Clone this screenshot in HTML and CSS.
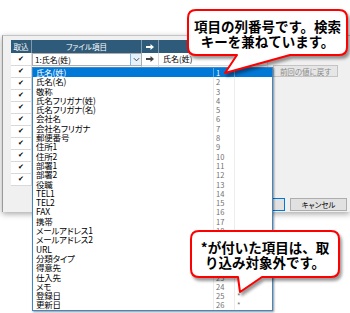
FILE: index.html
```html
<!DOCTYPE html>
<html lang="ja">
<head>
<meta charset="utf-8">
<link rel="stylesheet" href="styles.css">
</head>
<body>
<div class="dialog">
  <div class="main">
    <div class="grid">
      <div class="hdr">
        <div class="c-chk">取込</div>
        <div class="c-file">ファイル項目</div>
        <div class="c-arr"><svg class="arrow" viewBox="0 0 8 6" width="8" height="6"><path d="M0 2H4.5V0L8 3L4.5 6V4H0Z" fill="#fff"/></svg></div>
        <div class="c-imp">インポート項目</div>
      </div>
      <div class="row first">
        <div class="c-chk">✔</div>
        <div class="c-file combo"><span class="combo-text">1:氏名(姓)</span><span class="drop"><svg viewBox="0 0 8 5" width="7" height="5"><path d="M1 1L4 4L7 1" fill="none" stroke="#333" stroke-width="1"/></svg></span></div>
        <div class="c-arr"><svg class="arrow" viewBox="0 0 8 6" width="8" height="6"><path d="M0 2H4.5V0L8 3L4.5 6V4H0Z" fill="#444"/></svg></div>
        <div class="c-imp">氏名(姓)</div>
      </div>
      <div class="row"><div class="c-chk">✔</div><div class="c-file"></div><div class="c-arr"></div><div class="c-imp"></div></div>
      <div class="row"><div class="c-chk">✔</div><div class="c-file"></div><div class="c-arr"></div><div class="c-imp"></div></div>
      <div class="row"><div class="c-chk">✔</div><div class="c-file"></div><div class="c-arr"></div><div class="c-imp"></div></div>
      <div class="row"><div class="c-chk">✔</div><div class="c-file"></div><div class="c-arr"></div><div class="c-imp"></div></div>
      <div class="row"><div class="c-chk">✔</div><div class="c-file"></div><div class="c-arr"></div><div class="c-imp"></div></div>
      <div class="row"><div class="c-chk">✔</div><div class="c-file"></div><div class="c-arr"></div><div class="c-imp"></div></div>
      <div class="row"><div class="c-chk">✔</div><div class="c-file"></div><div class="c-arr"></div><div class="c-imp"></div></div>
      <div class="row"><div class="c-chk">✔</div><div class="c-file"></div><div class="c-arr"></div><div class="c-imp"></div></div>
      <div class="row"><div class="c-chk">✔</div><div class="c-file"></div><div class="c-arr"></div><div class="c-imp"></div></div>
      <div class="row"><div class="c-chk">✔</div><div class="c-file"></div><div class="c-arr"></div><div class="c-imp"></div></div>
    </div>
    <div class="side">
      <button class="btn restore">前回の値に戻す</button>
    </div>
  </div>
  <div class="footer">
    <button class="btn ok">OK</button>
    <button class="btn">キャンセル</button>
  </div>
</div>

<div class="dropdown">
  <div class="item sel"><span class="name">氏名(姓)</span><span class="num">1</span><span class="mark"></span></div>
  <div class="item"><span class="name">氏名(名)</span><span class="num">2</span><span class="mark"></span></div>
  <div class="item"><span class="name">敬称</span><span class="num">3</span><span class="mark"></span></div>
  <div class="item"><span class="name">氏名フリガナ(姓)</span><span class="num">4</span><span class="mark"></span></div>
  <div class="item"><span class="name">氏名フリガナ(名)</span><span class="num">5</span><span class="mark"></span></div>
  <div class="item"><span class="name">会社名</span><span class="num">6</span><span class="mark"></span></div>
  <div class="item"><span class="name">会社名フリガナ</span><span class="num">7</span><span class="mark"></span></div>
  <div class="item"><span class="name">郵便番号</span><span class="num">8</span><span class="mark"></span></div>
  <div class="item"><span class="name">住所1</span><span class="num">9</span><span class="mark"></span></div>
  <div class="item"><span class="name">住所2</span><span class="num">10</span><span class="mark"></span></div>
  <div class="item"><span class="name">部署1</span><span class="num">11</span><span class="mark"></span></div>
  <div class="item"><span class="name">部署2</span><span class="num">12</span><span class="mark"></span></div>
  <div class="item"><span class="name">役職</span><span class="num">13</span><span class="mark"></span></div>
  <div class="item"><span class="name">TEL1</span><span class="num">14</span><span class="mark"></span></div>
  <div class="item"><span class="name">TEL2</span><span class="num">15</span><span class="mark"></span></div>
  <div class="item"><span class="name">FAX</span><span class="num">16</span><span class="mark"></span></div>
  <div class="item"><span class="name">携帯</span><span class="num">17</span><span class="mark"></span></div>
  <div class="item"><span class="name">メールアドレス1</span><span class="num">18</span><span class="mark"></span></div>
  <div class="item"><span class="name">メールアドレス2</span><span class="num">19</span><span class="mark"></span></div>
  <div class="item"><span class="name">URL</span><span class="num">20</span><span class="mark"></span></div>
  <div class="item"><span class="name">分類タイプ</span><span class="num">21</span><span class="mark"></span></div>
  <div class="item"><span class="name">得意先</span><span class="num">22</span><span class="mark"></span></div>
  <div class="item"><span class="name">仕入先</span><span class="num">23</span><span class="mark"></span></div>
  <div class="item"><span class="name">メモ</span><span class="num">24</span><span class="mark"></span></div>
  <div class="item"><span class="name">登録日</span><span class="num">25</span><span class="mark">*</span></div>
  <div class="item"><span class="name">更新日</span><span class="num">26</span><span class="mark">*</span></div>
</div>

<div class="callout c1">
  <svg class="bubble" viewBox="0 0 166 72" width="166" height="72">
    <path d="M12 4H155Q163 4 163 12V41Q163 49 155 49H106L41 67L53 49H12Q4 49 4 41V12Q4 4 12 4Z" fill="#fff" stroke="#f00" stroke-width="2" stroke-linejoin="round"/>
  </svg>
  <div class="ctext">項目の列番号です。検索<br>キーを兼ねています。</div>
</div>

<div class="callout c2">
  <svg class="bubble" viewBox="0 0 160 70" width="160" height="70">
    <path d="M12 4H144Q152 4 152 12V42Q152 50 144 50H75L53 65L51 50H12Q4 50 4 42V12Q4 4 12 4Z" fill="#fff" stroke="#f00" stroke-width="2" stroke-linejoin="round"/>
  </svg>
  <div class="ctext">*が付いた項目は、取<br>り込み対象外です。</div>
</div>
</body>
</html>
```

FILE: styles.css
```css
html, body {
  margin: 0;
  padding: 0;
}
body {
  width: 350px;
  height: 313px;
  overflow: hidden;
  position: relative;
  background: #fff;
  font-family: "Noto Sans CJK JP", "Noto Sans", sans-serif;
  font-feature-settings: "palt";
  color: #000;
}

.dialog {
  box-sizing: border-box;
  width: 348px;
  margin: 35px 0 0 2px;
  padding: 4px 3px 1px 8px;
  background: #f0f0f0;
  border-left: 1px solid #9a9a9a;
  border-top: 1px solid #c4c4c4;
  box-shadow: 0 2px 6px rgba(0, 0, 0, 0.35);
}

.main {
  display: flex;
  gap: 5px;
}

.grid {
  width: 257px;
}

.hdr, .row {
  display: grid;
  grid-template-columns: 21px 110px 17px 109px;
}

.hdr {
  height: 13px;
  background: #2f5b7a;
  color: #fff;
  font-size: 7.5px;
  line-height: 13px;
}
.hdr > div {
  text-align: center;
  border-right: 1px solid #7f9bb0;
  white-space: nowrap;
  overflow: hidden;
  display: flex;
  align-items: center;
  justify-content: center;
}
.hdr > div:last-child { border-right: none; }

.row {
  height: 12px;
  font-size: 8px;
  line-height: 11px;
}
.row.first {
  height: 13px;
  line-height: 12px;
}
.row > div {
  box-sizing: border-box;
  border-bottom: 1px solid #d9d9d9;
  border-right: 1px solid #d9d9d9;
  background: #fff;
}
.row .c-chk {
  text-align: center;
  font-family: "DejaVu Sans", sans-serif;
  font-size: 7px;
}
.row .c-arr {
  display: flex;
  align-items: center;
  justify-content: center;
}
.row .c-imp {
  padding-left: 4px;
}

.combo {
  display: flex;
  align-items: stretch;
  border: 1px solid #adadad !important;
}
.combo-text {
  flex: 1;
  padding-left: 2px;
  line-height: 11px;
}
.drop {
  width: 10px;
  background: #e5f1fb;
  border-left: 1px solid #7eb4ea;
  display: flex;
  align-items: center;
  justify-content: center;
}

.side {
  padding-top: 16px;
}

.btn {
  box-sizing: border-box;
  height: 13px;
  width: 57px;
  padding: 0;
  margin: 0;
  border: 1px solid #adadad;
  background: #e1e1e1;
  font-family: "Noto Sans CJK JP", sans-serif;
  font-feature-settings: "palt";
  font-size: 7.5px;
  line-height: 11px;
  color: #000;
}
.btn.restore {
  width: 65px;
  height: 12px;
  color: #8a8a8a;
  background: #e6e6e6;
  border-color: #c4c4c4;
}
.btn.ok {
  border-color: #0078d7;
}

.footer {
  display: flex;
  justify-content: flex-end;
  gap: 5px;
  margin-top: 12px;
}

/* dropdown list overlay */
.dropdown {
  position: absolute;
  left: 32px;
  top: 67px;
  width: 241px;
  box-sizing: border-box;
  background: #fff;
  border: 1px solid #3f87c9;
  box-shadow: 1px 1px 2px rgba(0, 0, 0, 0.45);
}
.item {
  display: grid;
  grid-template-columns: 180px 21px 1fr;
  height: 9.3px;
  line-height: 9.3px;
  font-size: 8.5px;
  white-space: nowrap;
}
.item .name {
  padding-left: 3px;
  letter-spacing: -0.2px;
}
.item .num, .item .mark {
  border-left: 1px solid #ececec;
  padding-left: 2px;
  color: #6f6f6f;
  font-size: 7.5px;
}
.item.sel {
  background: #0078d7;
  color: #fff;
}
.item.sel .num, .item.sel .mark {
  color: #fff;
  border-left-color: #5aa6e6;
}

/* callouts */
.callout {
  position: absolute;
}
.bubble {
  position: absolute;
  left: 0;
  top: 0;
  filter: drop-shadow(2px 3px 1.5px rgba(0, 0, 0, 0.4));
}
.ctext {
  position: relative;
  box-sizing: border-box;
  display: flex;
  align-items: center;
  justify-content: center;
  text-align: center;
  font-weight: 700;
  font-size: 13.5px;
  line-height: 15px;
  font-feature-settings: normal;
  white-space: nowrap;
}
.c1 {
  left: 184px;
  top: 6px;
  width: 166px;
  height: 72px;
}
.c1 .ctext {
  margin: 4px 0 0 4px;
  width: 159px;
  height: 45px;
  padding-top: 3px;
}
.c2 {
  left: 187px;
  top: 227px;
  width: 160px;
  height: 70px;
}
.c2 .ctext {
  margin: 4px 0 0 4px;
  width: 148px;
  height: 46px;
  padding-top: 1px;
}
```
